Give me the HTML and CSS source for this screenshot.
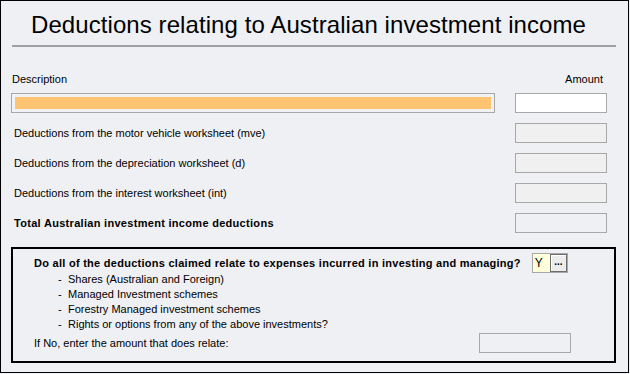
FILE: index.html
```html
<!DOCTYPE html>
<html>
<head>
    <title>Deductions relating to Australian investment income</title>
    <meta charset="UTF-8">
    <link rel="stylesheet" href="styles.css">
</head>
<body>
    <div class="frame">
        <h1 class="title">Deductions relating to Australian investment income</h1>
        <div class="rule"></div>

        <div class="head-row">
            <span>Description</span>
            <span class="amount-head">Amount</span>
        </div>

        <div class="rows">
            <div class="desc-input"><div class="desc-fill"></div></div>
            <div class="amount-box editable"></div>

            <div class="row-label">Deductions from the motor vehicle worksheet (mve)</div>
            <div class="amount-box disabled"></div>

            <div class="row-label">Deductions from the depreciation worksheet (d)</div>
            <div class="amount-box disabled"></div>

            <div class="row-label">Deductions from the interest worksheet (int)</div>
            <div class="amount-box disabled"></div>

            <div class="row-label total">Total Australian investment income deductions</div>
            <div class="amount-box"></div>
        </div>

        <div class="question-box">
            <div class="question-row">
                <strong>Do all of the deductions claimed relate to expenses incurred in investing and managing?</strong>
                <div class="yn-field">
                    <span class="yn-value">Y</span>
                    <span class="yn-button">...</span>
                </div>
            </div>
            <ul class="options">
                <li>Shares (Australian and Foreign)</li>
                <li>Managed Investment schemes</li>
                <li>Forestry Managed investment schemes</li>
                <li>Rights or options from any of the above investments?</li>
            </ul>
            <div class="if-no-row">
                <span>If No, enter the amount that does relate:</span>
                <div class="amount-box small"></div>
            </div>
        </div>
    </div>
</body>
</html>
```

FILE: styles.css
```css
body {
    margin: 0;
    font-family: "Liberation Sans", Arial, sans-serif;
    font-size: 11px;
    color: #000;
    background: #eff0f4;
}

.frame {
    box-sizing: border-box;
    width: 629px;
    height: 373px;
    border: 1px solid #000;
    background: #eff0f4;
    padding: 0 13px 0 9px;
}

.title {
    margin: 0;
    padding: 11px 0 0 21px;
    font-size: 24px;
    font-weight: normal;
    line-height: 26px;
    letter-spacing: 0.08px;
}

.rule {
    height: 2px;
    background: #a0a0a0;
    margin: 7px 0 0 2px;
    width: 604px;
}

.head-row {
    display: flex;
    justify-content: space-between;
    margin-top: 26px;
    padding: 0 12px 0 2px;
    line-height: 13px;
}

.rows {
    display: grid;
    grid-template-columns: 484px 92px;
    column-gap: 20px;
    row-gap: 10px;
    margin-top: 7px;
    margin-left: 1px;
}

.desc-input {
    box-sizing: border-box;
    height: 20px;
    border: 1px solid #a8a8a8;
    padding: 3px;
    background: #f2f2f4;
}

.desc-fill {
    height: 100%;
    background: #ffc472;
}

.amount-box {
    box-sizing: border-box;
    height: 20px;
    border: 1px solid #a8a8a8;
}

.amount-box.editable {
    background: #fff;
}

.amount-box.disabled {
    background: #f0f0f0;
}

.row-label {
    display: flex;
    align-items: center;
    padding-left: 3px;
}

.row-label.total {
    font-weight: bold;
    letter-spacing: 0.3px;
}

.question-box {
    box-sizing: border-box;
    width: 605px;
    height: 116px;
    margin-top: 14px;
    margin-left: 1px;
    border: 2px solid #000;
    padding: 4px 0 0 21px;
}

.question-row {
    display: flex;
    align-items: center;
}

.question-row strong {
    letter-spacing: 0.27px;
}

.yn-field {
    display: flex;
    margin-left: 11px;
    border: 1px solid #a8a8a8;
    height: 18px;
}

.yn-value {
    width: 15px;
    padding-left: 2px;
    background: #ffffdc;
    font-size: 12px;
    line-height: 18px;
}

.yn-button {
    box-sizing: border-box;
    width: 17px;
    border: 1px solid #6d6d6d;
    box-shadow: inset 1px 1px 0 #fff;
    background: #ececec;
    font-size: 10px;
    line-height: 14px;
    text-align: center;
    font-weight: bold;
}

.options {
    list-style: none;
    margin: -1px 0 0;
    padding: 0 0 0 24px;
}

.options li {
    line-height: 15px;
}

.options li::before {
    content: "-";
    display: inline-block;
    width: 10px;
}

.if-no-row {
    display: flex;
    justify-content: space-between;
    align-items: center;
    margin-top: 1px;
    width: 537px;
}

.amount-box.small {
    width: 92px;
}
```
